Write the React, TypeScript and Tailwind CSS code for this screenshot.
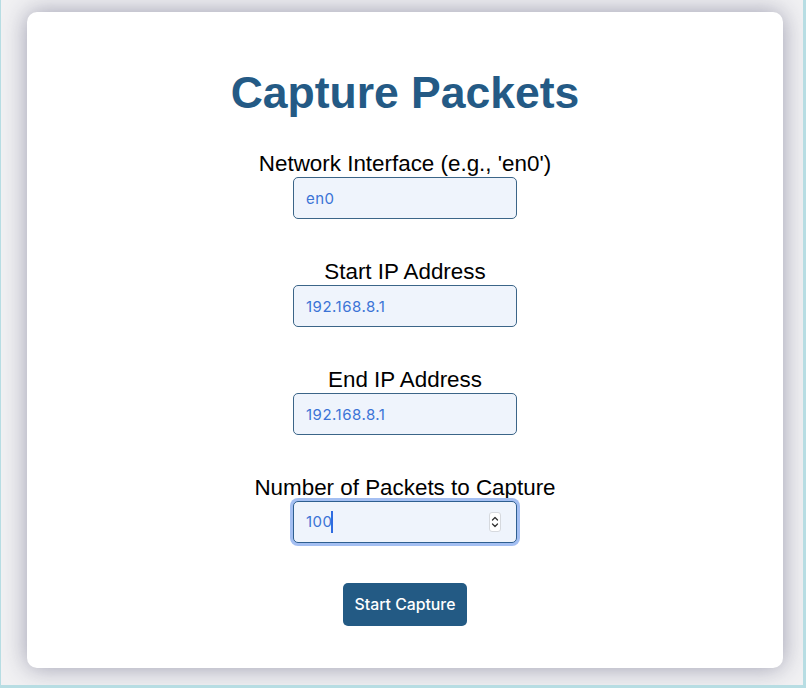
import React from "react";

function Field({ label, value }: { label: string; value: string }) {
  return (
    <div className="flex flex-col items-center">
      <label className="block text-[22.4px] leading-[26px] text-black" style={{ fontFamily: '"Liberation Sans", Arial, sans-serif' }}>
        {label}
      </label>
      <input
        readOnly
        value={value}
        className="h-[42px] w-[224px] rounded-[5px] border border-[#3b6588] bg-[#eff4fc] px-[12px] text-[15px] tracking-[0.5px] text-[#3b73d6] outline-none"
        style={{ fontFamily: 'Inter, "Noto Sans", sans-serif' }}
      />
    </div>
  );
}

export default function App() {
  return (
    <div className="h-[688px] w-[806px] overflow-hidden border-b-[3px] border-l border-r-[3px] border-[#b7dde3] bg-[#f1f1f3] pl-[26px] pt-[12px]">
      <div className="flex h-[656px] w-[756px] flex-col items-center rounded-[10px] bg-white pt-[55px] shadow-[0_0_24px_rgba(40,40,80,0.42)]">
        <h1
          className="text-[44.5px] font-bold leading-[51px] text-[#245a85]"
          style={{ fontFamily: '"Liberation Sans", Arial, sans-serif' }}
        >
          Capture Packets
        </h1>
        <div className="mt-[33px] flex flex-col items-center gap-[40px]">
          <Field label="Network Interface (e.g., 'en0')" value="en0" />
          <Field label="Start IP Address" value="192.168.8.1" />
          <Field label="End IP Address" value="192.168.8.1" />
          <div className="flex flex-col items-center">
            <label className="block text-[22.4px] leading-[26px] text-black" style={{ fontFamily: '"Liberation Sans", Arial, sans-serif' }}>
              Number of Packets to Capture
            </label>
            <div
              className="flex h-[42px] w-[224px] items-center rounded-[5px] border border-[#2f5f90] bg-[#eff4fc] pl-[12px] pr-[15px] text-[15px] tracking-[0.5px] text-[#3b73d6] ring-[3px] ring-[#a4bff2]"
              style={{ fontFamily: 'Inter, "Noto Sans", sans-serif' }}
            >
              <span>100</span>
              <span className="ml-[-2px] h-[22px] w-[2px] bg-[#2f6be0]" />
              <span className="flex-1" />
              <span className="flex h-[20px] w-[12px] flex-col items-center justify-center rounded-[3px] border border-[#d6d9de] bg-white">
                <svg width="8" height="16" viewBox="0 0 8 16" fill="none" stroke="#333" strokeWidth="1.3" strokeLinecap="round" strokeLinejoin="round">
                  <path d="M1.5 6 L4 3.5 L6.5 6" />
                  <path d="M1.5 10 L4 12.5 L6.5 10" />
                </svg>
              </span>
            </div>
          </div>
          <button
            className="h-[43px] w-[124px] rounded-[5px] bg-[#235a84] text-[15.8px] font-medium text-white"
            style={{ fontFamily: 'Inter, "Noto Sans", sans-serif' }}
          >
            Start Capture
          </button>
        </div>
      </div>
    </div>
  );
}
